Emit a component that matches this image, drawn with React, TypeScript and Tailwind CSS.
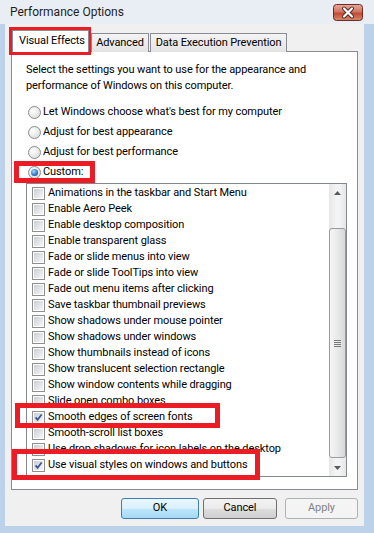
const items: [string, boolean][] = [
  ['Animations in the taskbar and Start Menu', false],
  ['Enable Aero Peek', false],
  ['Enable desktop composition', false],
  ['Enable transparent glass', false],
  ['Fade or slide menus into view', false],
  ['Fade or slide ToolTips into view', false],
  ['Fade out menu items after clicking', false],
  ['Save taskbar thumbnail previews', false],
  ['Show shadows under mouse pointer', false],
  ['Show shadows under windows', false],
  ['Show thumbnails instead of icons', false],
  ['Show translucent selection rectangle', false],
  ['Show window contents while dragging', false],
  ['Slide open combo boxes', false],
  ['Smooth edges of screen fonts', true],
  ['Smooth-scroll list boxes', false],
  ['Use drop shadows for icon labels on the desktop', false],
  ['Use visual styles on windows and buttons', true],
]

const radios = [
  "Let Windows choose what's best for my computer",
  'Adjust for best appearance',
  'Adjust for best performance',
  'Custom:',
]

const CheckBox = ({ checked }: { checked: boolean }) => (
  <span className="flex h-[13px] w-[13px] shrink-0 items-center justify-center border border-[#8f8f8f] bg-white">
    <span className="relative h-[9px] w-[9px] bg-[linear-gradient(135deg,#c9cdd3,#f7f8f9)]">
      {checked ? (
        <svg width="9" height="9" viewBox="0 0 9 9" className="absolute left-0 top-0">
          <path d="M1.6 4.4 L3.6 6.8 L7.6 1.4" fill="none" stroke="#3d5291" strokeWidth="1.7" />
        </svg>
      ) : null}
    </span>
  </span>
)

const Radio = ({ checked }: { checked: boolean }) => (
  <span className="flex h-[13px] w-[13px] shrink-0 items-center justify-center rounded-full border border-[#8b8b8b] bg-[radial-gradient(circle_at_35%_35%,#ffffff,#d6d6d6)]">
    {checked ? (
      <span className="h-[7px] w-[7px] rounded-full bg-[radial-gradient(circle_at_40%_35%,#a8dcff,#2a72c0_60%,#103f80)]" />
    ) : null}
  </span>
)

const ScrollArrow = ({ up }: { up: boolean }) => (
  <div className="flex h-[17px] w-[17px] items-center justify-center">
    <svg width="7" height="4" viewBox="0 0 7 4">
      <path d={up ? 'M0 4 L3.5 0 L7 4 Z' : 'M0 0 L3.5 4 L7 0 Z'} fill="#5a5a5a" />
    </svg>
  </div>
)

const Mark = ({ className }: { className: string }) => (
  <div className={`pointer-events-none absolute border-[5px] border-[#ec1c24] ${className}`} />
)

export default function App() {
  return (
    <div
      className="relative flex h-[533px] w-[374px] flex-col overflow-hidden bg-[#bcd2ea] text-[11px] tracking-[-0.1px] text-black"
      style={{ fontFamily: 'Roboto, "Open Sans", sans-serif' }}
    >
      <div className="flex h-[24px] shrink-0 items-center justify-between bg-[#e9eef4] pl-[10px] pr-[11px]">
        <span className="text-[12px] tracking-normal text-[#1e1e1e]">Performance Options</span>
        <svg width="30" height="17" viewBox="0 0 30 17" className="mt-px">
          <defs>
            <linearGradient id="cls" x1="0" y1="0" x2="0" y2="1">
              <stop offset="0" stopColor="#e9a99b" />
              <stop offset="0.45" stopColor="#d27563" />
              <stop offset="0.55" stopColor="#c14a36" />
              <stop offset="1" stopColor="#d88a6e" />
            </linearGradient>
          </defs>
          <rect x="0.5" y="0.5" width="29" height="16" rx="3" fill="url(#cls)" stroke="#6b2b23" />
          <path d="M11 4.5 L19 12.5 M19 4.5 L11 12.5" stroke="#4d2a28" strokeWidth="4" strokeLinecap="round" />
          <path d="M11 4.5 L19 12.5 M19 4.5 L11 12.5" stroke="#ffffff" strokeWidth="2.2" strokeLinecap="round" />
        </svg>
      </div>

      <div className="mb-[7px] ml-[5px] mr-[10px] flex flex-1 flex-col bg-[#f0f0f0] px-[6px] pt-[6px]">
        <div className="relative z-10 -mb-px flex h-[22px] items-end whitespace-nowrap">
          <div className="ml-px flex h-[22px] w-[77px] items-center border border-b-0 border-[#898c95] bg-white pl-[6px]">
            Visual Effects
          </div>
          <div className="ml-[2px] flex h-[19px] w-[58px] items-center justify-center border border-b-0 border-[#898c95] bg-[linear-gradient(#f4f4f4,#e3e3e3)]">
            Advanced
          </div>
          <div className="ml-[1px] flex h-[19px] w-[137px] items-center justify-center border border-b-0 border-[#898c95] bg-[linear-gradient(#f4f4f4,#e3e3e3)]">
            Data Execution Prevention
          </div>
        </div>

        <div className="flex h-[439px] flex-col border border-[#898c95] bg-white pl-[14px] pt-[10px]">
          <p className="whitespace-nowrap leading-[16px]">
            Select the settings you want to use for the appearance and
            <br />
            performance of Windows on this computer.
          </p>

          <div className="mt-2 flex flex-col">
            {radios.map((label, index) => (
              <div key={label} className="flex h-5 items-center gap-[2px] pl-[2px]">
                <Radio checked={index === 3} />
                <span>{label}</span>
              </div>
            ))}
          </div>

          <div className="mt-px flex h-[294px] w-[321px] border border-[#828790] bg-white">
            <div className="flex flex-1 flex-col pl-[5px] pt-px">
              {items.map(([label, checked]) => (
                <div key={label} className="flex h-4 items-center gap-[3px] whitespace-nowrap">
                  <CheckBox checked={checked} />
                  <span>{label}</span>
                </div>
              ))}
            </div>
            <div className="flex w-[17px] flex-col bg-[linear-gradient(90deg,#e6e6e6,#f4f4f4_40%,#f4f4f4_60%,#e6e6e6)]">
              <ScrollArrow up />
              <div className="flex flex-1 flex-col pt-[27px]">
                <div className="flex h-[230px] items-center justify-center rounded-[3px] border border-[#9a9a9a] bg-[linear-gradient(90deg,#f6f6f6,#e9e9e9_50%,#d8d8d8)]">
                  <div className="flex flex-col gap-[1px]">
                    <span className="h-px w-[7px] bg-[#7a7a7a]" />
                    <span className="h-px w-[7px] bg-[#7a7a7a]" />
                    <span className="h-px w-[7px] bg-[#7a7a7a]" />
                    <span className="h-px w-[7px] bg-[#7a7a7a]" />
                  </div>
                </div>
              </div>
              <ScrollArrow up={false} />
            </div>
          </div>
        </div>

        <div className="mt-2 flex justify-end gap-[4px]">
          <button className="h-[21px] w-[78px] rounded-[3px] border border-[#3c7fb1] bg-[linear-gradient(#eaf6fd_0%,#d9f0fc_50%,#bee6fd_51%,#a7d9f5)]">
            OK
          </button>
          <button className="h-[21px] w-[74px] rounded-[3px] border border-[#707070] bg-[linear-gradient(#f2f2f2_0%,#ebebeb_50%,#dddddd_51%,#cfcfcf)]">
            Cancel
          </button>
          <button className="ml-[4px] h-[21px] w-[73px] rounded-[3px] border border-[#adb2b5] bg-[#f4f4f4] text-[#838383]">
            Apply
          </button>
        </div>
      </div>

      <Mark className="left-[9px] top-[27px] h-[28px] w-[82px]" />
      <Mark className="left-[14px] top-[161px] h-[22px] w-[81px]" />
      <Mark className="left-[15px] top-[403px] h-[25px] w-[205px]" />
      <Mark className="left-[12px] top-[449px] h-[31px] w-[248px]" />
    </div>
  )
}
